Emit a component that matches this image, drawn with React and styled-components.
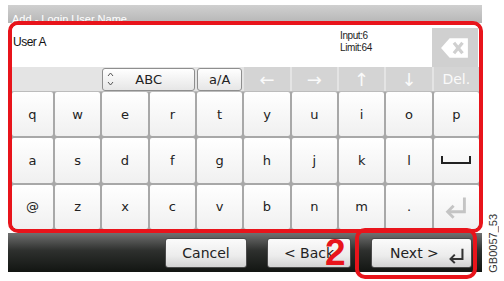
import React from 'react';
import styled, { createGlobalStyle } from 'styled-components';

const GlobalStyle = createGlobalStyle`
  body {
    margin: 0;
    background: #fff;
  }
`;

const Page = styled.div`
  display: flex;
  width: 504px;
  height: 281px;
  padding: 5px 0 0 8px;
  box-sizing: border-box;
  overflow: hidden;
`;

const Screen = styled.div`
  position: relative;
  width: 475px;
  display: flex;
  flex-direction: column;
`;

const TitleBar = styled.div`
  width: 474px;
  height: 18px;
  padding: 9px 0 0 4px;
  box-sizing: border-box;
  background: linear-gradient(#d0d0d0, #b6b6b6);
  color: #fff;
  font: 11px/11px "Liberation Sans", Arial, sans-serif;
  white-space: nowrap;
`;

const Frame = styled.div`
  position: relative;
  z-index: 1;
  margin-top: -2px;
  height: 212px;
  box-sizing: border-box;
  border: 4px solid #e8141b;
  border-radius: 10px;
  background: #fff;
  overflow: hidden;
  display: flex;
  flex-direction: column;
`;

const InputArea = styled.div`
  height: 42px;
  display: flex;
  background: #fff;
`;

const InputText = styled.div`
  flex: 1;
  padding: 10px 0 0 1px;
  font: 12px "Liberation Sans", Arial, sans-serif;
  letter-spacing: -0.5px;
  color: #111;
`;

const Counter = styled.div`
  width: 92px;
  padding-top: 5px;
  font: 10px/12px "Liberation Sans", Arial, sans-serif;
  letter-spacing: -0.4px;
  color: #222;
`;

const BackspaceBox = styled.div`
  width: 46px;
  margin: 3px 1px 0 0;
  background: #d0d0d0;
  display: flex;
  align-items: center;
  justify-content: center;
`;

const ModeRow = styled.div`
  height: 24px;
  display: grid;
  grid-template-columns: 41px repeat(9, 1fr);
  gap: 2px;
  background: #e4e4e4;
  border-bottom: 1px solid #bcbcbc;
`;

const ModeButton = styled.div`
  grid-column: span ${p => p.span || 1};
  position: relative;
  margin-top: 1px;
  display: flex;
  align-items: center;
  justify-content: center;
  border: 1px solid #8e8e8e;
  border-radius: 3px;
  background: linear-gradient(#ffffff, #e6e6e6);
  font: 13px "DejaVu Sans", sans-serif;
  color: #222;
`;

const UpDown = styled.span`
  position: absolute;
  left: 4px;
  top: 2px;
  display: flex;
`;

const NavKey = styled.div`
  display: flex;
  align-items: center;
  justify-content: center;
  background: #d4d4d4;
  color: #fafafa;
  font: ${p => (p.small ? '14px' : '18px')} "DejaVu Sans", sans-serif;
`;

const KeyGrid = styled.div`
  flex: 1;
  display: grid;
  grid-template-columns: 41px repeat(9, 1fr);
  grid-template-rows: repeat(3, 1fr);
  gap: 2px;
  background: #a8a8a8;
`;

const Key = styled.div`
  display: flex;
  align-items: center;
  justify-content: center;
  border-radius: 2px;
  background: linear-gradient(#ffffff, #f0f0f0);
  font: 13px "DejaVu Sans", sans-serif;
  color: #222;
`;

const BottomBar = styled.div`
  width: 474px;
  height: 39px;
  display: flex;
  align-items: center;
  justify-content: flex-end;
  gap: 20px;
  padding-right: 10px;
  box-sizing: border-box;
  background: linear-gradient(#707070, #2e302e 45%, #121512);
`;

const BarButton = styled.div`
  width: ${p => p.w}px;
  height: 30px;
  box-sizing: border-box;
  position: relative;
  display: flex;
  align-items: center;
  justify-content: ${p => (p.left ? 'flex-start' : 'center')};
  padding-left: ${p => (p.left ? '18px' : '0')};
  border: 1px solid #4a4a4a;
  border-radius: 3px;
  background: linear-gradient(#fbfbfb, #ececec 60%, #d2d2d2);
  font: 14px "DejaVu Sans", sans-serif;
  color: #222;
`;

const EnterMark = styled.span`
  position: absolute;
  right: 6px;
  bottom: 3px;
  display: flex;
`;

const StepNumber = styled.div`
  position: absolute;
  z-index: 3;
  left: 317px;
  top: 229px;
  font: bold 37px/37px "Liberation Sans", Arial, sans-serif;
  color: #e8141b;
`;

const Highlight = styled.div`
  position: absolute;
  z-index: 2;
  left: 347px;
  top: 223px;
  width: 122px;
  height: 51px;
  box-sizing: border-box;
  border: 4px solid #e8141b;
  border-radius: 10px;
`;

const FigureLabel = styled.div`
  align-self: flex-end;
  margin: 0 0 8px 4px;
  writing-mode: vertical-rl;
  transform: rotate(180deg);
  font: 11px "Liberation Sans", Arial, sans-serif;
  color: #333;
`;

const rows = [
  ['q', 'w', 'e', 'r', 't', 'y', 'u', 'i', 'o', 'p'],
  ['a', 's', 'd', 'f', 'g', 'h', 'j', 'k', 'l', 'space'],
  ['@', 'z', 'x', 'c', 'v', 'b', 'n', 'm', '.', 'enter'],
];

function BackspaceIcon() {
  return (
    <svg width="30" height="22" viewBox="0 0 28 20">
      <path d="M9 1 H26 V19 H9 L1 10 Z" fill="#fff" />
      <path d="M13 5 L21 15 M21 5 L13 15" stroke="#d0d0d0" strokeWidth="3" />
    </svg>
  );
}

function SpaceIcon() {
  return (
    <svg width="30" height="10" viewBox="0 0 30 10">
      <path d="M1 1 V8 H29 V1" fill="none" stroke="#222" strokeWidth="2" />
    </svg>
  );
}

function EnterIcon({ color, size }) {
  return (
    <svg width={size} height={size} viewBox="0 0 20 20">
      <path d="M17 2 V14 H4" fill="none" stroke={color} strokeWidth="2.4" />
      <path d="M8 9 L3 14 L8 19" fill="none" stroke={color} strokeWidth="2.4" />
    </svg>
  );
}

function UpDownIcon() {
  return (
    <svg width="7" height="16" viewBox="0 0 7 16">
      <path d="M1 5 L3.5 2 L6 5 M1 11 L3.5 14 L6 11" fill="none" stroke="#555" strokeWidth="1" />
    </svg>
  );
}

function renderKey(k) {
  if (k === 'space') return <SpaceIcon />;
  if (k === 'enter') return <EnterIcon color="#c4c4c4" size={24} />;
  return k;
}

export default function App() {
  return (
    <>
      <GlobalStyle />
      <Page>
        <Screen>
          <TitleBar>Add - Login User Name</TitleBar>
          <Frame>
            <InputArea>
              <InputText>User A</InputText>
              <Counter>
                Input:6
                <br />
                Limit:64
              </Counter>
              <BackspaceBox>
                <BackspaceIcon />
              </BackspaceBox>
            </InputArea>
            <ModeRow>
              <div style={{ gridColumn: 'span 2' }} />
              <ModeButton span={2}>
                <UpDown>
                  <UpDownIcon />
                </UpDown>
                ABC
              </ModeButton>
              <ModeButton>a/A</ModeButton>
              <NavKey>←</NavKey>
              <NavKey>→</NavKey>
              <NavKey>↑</NavKey>
              <NavKey>↓</NavKey>
              <NavKey small>Del.</NavKey>
            </ModeRow>
            <KeyGrid>
              {rows.flat().map((k, i) => (
                <Key key={i}>{renderKey(k)}</Key>
              ))}
            </KeyGrid>
          </Frame>
          <BottomBar>
            <BarButton w={82}>Cancel</BarButton>
            <BarButton w={84}>&lt; Back</BarButton>
            <BarButton w={101} left>
              Next &gt;
              <EnterMark>
                <EnterIcon color="#333" size={17} />
              </EnterMark>
            </BarButton>
          </BottomBar>
          <StepNumber>2</StepNumber>
          <Highlight />
        </Screen>
        <FigureLabel>GB0057_53</FigureLabel>
      </Page>
    </>
  );
}
